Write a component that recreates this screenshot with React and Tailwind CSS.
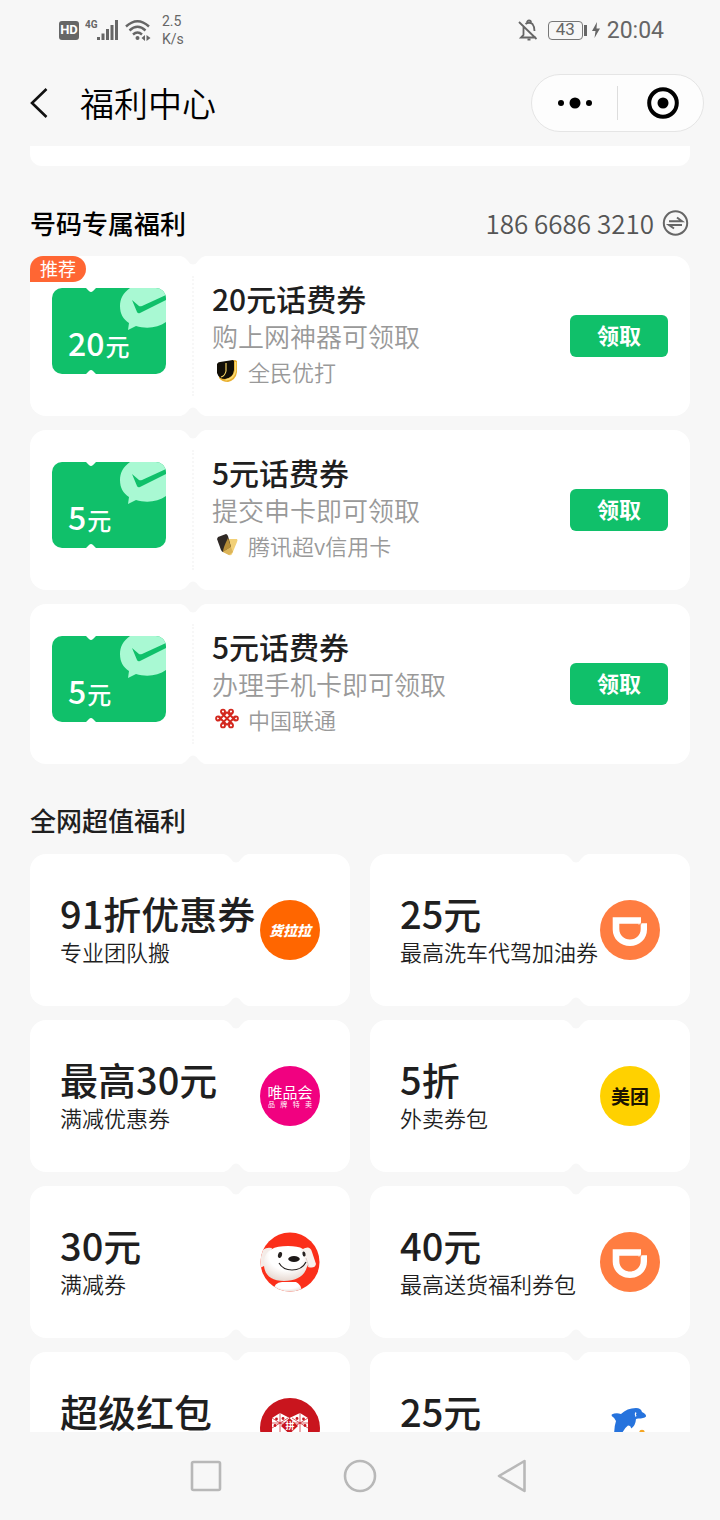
const phoneCoupons = [
  { id: 1, amount: "20", title: "20元话费券", desc: "购上网神器可领取", brand: "全民优打", Icon: QuanminIcon, recommended: true },
  { id: 2, amount: "5", title: "5元话费券", desc: "提交申卡即可领取", brand: "腾讯超v信用卡", Icon: CreditCardIcon },
  { id: 3, amount: "5", title: "5元话费券", desc: "办理手机卡即可领取", brand: "中国联通", Icon: UnicomIcon },
];

const deals = [
  { id: 1, title: "91折优惠券", desc: "专业团队搬", Logo: HuolalaLogo },
  { id: 2, title: "25元", desc: "最高洗车代驾加油券", Logo: DidiLogo },
  { id: 3, title: "最高30元", desc: "满减优惠券", Logo: VipLogo },
  { id: 4, title: "5折", desc: "外卖券包", Logo: MeituanLogo },
  { id: 5, title: "30元", desc: "满减券", Logo: JdLogo },
  { id: 6, title: "40元", desc: "最高送货福利券包", Logo: DidiLogo },
  { id: 7, title: "超级红包", Logo: PddLogo },
  { id: 8, title: "25元", Logo: DolphinLogo },
];

/* ---------- Brand icons ---------- */

function QuanminIcon() {
  return (
    <svg viewBox="0 0 24 24" className="size-6" aria-hidden="true">
      <path d="M5 4 20 1 22 2V13Q21 21 13 23 7 23 4 19Z" fill="#e9b030" />
      <path d="M2 5Q3 3 5 3L18 1 19 2V11Q18 19 10 20 4 20 2 14Z" fill="#120e06" />
      <path d="M11 4v8q-1 5-5 6" fill="none" stroke="#f1cf62" strokeWidth="1.2" />
      <path d="M20.500 3v9q-2 8-10 9" fill="none" stroke="#fbdc74" strokeWidth="1.4" />
    </svg>
  );
}

function CreditCardIcon() {
  return (
    <svg viewBox="0 0 24 24" className="size-6" aria-hidden="true">
      <path d="M12 6 22 6Q23 7 22 9L17 21Q16 23 14 22L8 19Z" fill="#f2d077" />
      <path d="M3 4 11 1Q12 1 13 3L16 14 8 19Q7 19 6 17L2 6Z" fill="#2f2925" />
      <path d="M13 5 16 14 8 19Q8 15 13 5Z" fill="#b58d38" />
      <path d="M16 14 18 19 14 22 8 19Z" fill="#dcb458" />
    </svg>
  );
}

function UnicomIcon() {
  return (
    <svg viewBox="0 0 24 24" className="size-6" fill="none" stroke="#d3281e" strokeWidth="1.9" aria-hidden="true">
      <path d="M6.500 6 17.500 17M6.500 17 17.500 6M3.500 9.500 12 18M20.500 9.500 12 18M3.500 13.500 12 5M20.500 13.500 12 5" />
      <circle cx="8" cy="4.600" r="2" />
      <circle cx="16" cy="4.600" r="2" />
      <circle cx="3.200" cy="11.500" r="2.100" />
      <circle cx="20.800" cy="11.500" r="2.100" />
      <circle cx="8" cy="18.400" r="2" />
      <circle cx="16" cy="18.400" r="2" />
    </svg>
  );
}

/* ---------- Deal logos ---------- */

function HuolalaLogo() {
  return (
    <div className="flex size-[60px] items-center justify-center rounded-full bg-[#ff6600] text-sm leading-none font-black text-white italic">
      货拉拉
    </div>
  );
}

function VipLogo() {
  return (
    <div className="flex size-[60px] flex-col items-center justify-center rounded-full bg-[#f10180] text-white">
      <span className="text-[15px] leading-4">唯品会</span>
      <span className="flex w-11 justify-between text-[7px] leading-2">
        <span>品</span>
        <span>牌</span>
        <span>特</span>
        <span>卖</span>
      </span>
    </div>
  );
}

function MeituanLogo() {
  return (
    <div className="flex size-[60px] items-center justify-center rounded-full bg-[#ffd100] pb-0.5 text-[19px] leading-none font-bold text-[#1c1400]">
      美团
    </div>
  );
}

function DidiLogo() {
  return (
    <svg viewBox="0 0 60 60" className="size-[60px]" aria-hidden="true">
      <circle cx="30" cy="30" r="30" fill="#ff7d41" />
      <path
        d="M12.700 17.300H41v6h6v6.200C47 39 39.500 46 30 46s-17.300-7-17.300-16.500Z M19.300 23.800V29c0 6 4.700 10.500 10.700 10.500S40.700 35 40.700 29v-4.200h-2.400v-1Z"
        fill="#fff"
        fillRule="evenodd"
      />
      <path d="M38.300 24.300h2.700v-1.500" fill="none" stroke="#ff7d41" strokeWidth=".8" />
    </svg>
  );
}

function JdLogo() {
  return (
    <svg viewBox="0 0 60 60" className="size-[60px]" aria-hidden="true">
      <defs>
        <clipPath id="jd-clip">
          <circle cx="30" cy="30" r="29.500" />
        </clipPath>
        <radialGradient id="jd-fur" cx=".5" cy=".3" r=".75">
          <stop offset=".5" stopColor="#fff" />
          <stop offset="1" stopColor="#e3d3cb" />
        </radialGradient>
      </defs>
      <g clipPath="url(#jd-clip)">
        <rect width="60" height="60" fill="#fb2f1a" />
        <path d="M12 16Q3 14 0 23V36L6 33Z" fill="#f4ece8" />
        <path d="M13 60Q14 50 22 50H36Q41 52 42 60Z" fill="url(#jd-fur)" />
        <path d="M4 29C5 18 14 14 28 14 42 14 49 18 48 29 47 43 38 49 24 49 9 49 3 41 4 29Z" fill="url(#jd-fur)" />
        <path d="M41 18Q50 12 52 20L56 32Q55 37 48 35L45 26Z" fill="#f8f1ed" />
        <path d="M46 26 49 35" fill="none" stroke="#d9c7c0" strokeWidth=".8" />
        <ellipse cx="20" cy="23" rx="2" ry="3" fill="#282321" transform="rotate(15 20 23)" />
        <ellipse cx="44" cy="22" rx="1.500" ry="2.600" fill="#282321" transform="rotate(-15 44 22)" />
        <ellipse cx="34" cy="27" rx="5.800" ry="2.900" fill="#1d1817" />
        <path d="M19 31Q23 38 32 38 42 38 46 30" fill="none" stroke="#282321" strokeWidth="1.200" />
      </g>
    </svg>
  );
}

function PddLogo() {
  return (
    <svg viewBox="0 0 60 60" className="size-[60px]" aria-hidden="true">
      <circle cx="30" cy="30" r="30" fill="#c9151e" />
      <path d="M20 15 29.500 20 40 15 48 20V34L30 52 12 34V20Z" fill="#fff" />
      <path
        d="M20 15V34M40 15V34M12 20 28 30M12 30 28 20M48 20 32 30M48 30 32 20M12 25H26M34 25H48"
        stroke="#c9151e"
        strokeWidth=".7"
      />
      <g fill="#c9151e">
        <circle cx="16.500" cy="21" r="1.400" />
        <circle cx="23" cy="20.500" r="1.400" />
        <circle cx="15" cy="27.500" r="1.400" />
        <circle cx="37" cy="20.500" r="1.400" />
        <circle cx="43.500" cy="21" r="1.400" />
        <circle cx="45" cy="27.500" r="1.400" />
        <path d="M29.500 20 38 28 29.500 36 21 28Z" />
      </g>
      <text x="30" y="31" textAnchor="middle" fontSize="9" fontWeight="700" fill="#fff">
        拼
      </text>
    </svg>
  );
}

function DolphinLogo() {
  return (
    <svg viewBox="0 0 60 60" className="size-[60px]" aria-hidden="true">
      <path
        d="M11.700 16.500Q16 14.500 21 16 27 10 36 10 41 10 42 14 46.500 16 46 18.500 44 20.500 38 20.500L36 21Q35.500 28 31 30.500 31 27.500 28 27.500 22 32 21 40L15 44Q13 32 16 23 15 20 11.700 18Z"
        fill="#2673dd"
      />
      <path d="M36 14.500q-1.500 2 0 4" fill="none" stroke="#fff" strokeWidth="1.300" />
      <circle cx="42" cy="34.500" r="2.800" fill="#f5a623" />
    </svg>
  );
}

/* ---------- Shared pieces ---------- */

// Small bites cut out of the top and bottom edge of a coupon
function Notches({ className = "" }) {
  return (
    <div className={`pointer-events-none absolute inset-y-0 flex w-6 flex-col justify-between text-[#f7f7f7] ${className}`}>
      <svg viewBox="0 0 24 9" className="w-full" fill="currentColor" aria-hidden="true">
        <path d="M0 0Q4 1 7 5 9 8.500 12 8.500T17 5Q20 1 24 0Z" />
      </svg>
      <svg viewBox="0 0 24 9" className="w-full rotate-180" fill="currentColor" aria-hidden="true">
        <path d="M0 0Q4 1 7 5 9 8.500 12 8.500T17 5Q20 1 24 0Z" />
      </svg>
    </div>
  );
}

function TicketImage({ amount }) {
  return (
    <div className="relative h-[86px] w-[114px] shrink-0 overflow-hidden rounded-[10px] bg-[#10c06a]">
      <svg viewBox="0 0 114 86" className="absolute inset-0 size-full" aria-hidden="true">
        <path d="M34 0 37 3Q39 5 41 3L44 0ZM34 86 37 83Q39 81 41 83L44 86Z" fill="#fff" />
        <path
          d="M78 0C71 5 68 11 68 18 68 26 71 31 77 35L76 42 84 38C94 41 106 40 114 34V0Z"
          fill="#a9f9d3"
        />
        <path d="M80 12 87 18Q88 18.500 90 18L114 7V12L88 25Q86 26 85 24Z" fill="#10c06a" />
      </svg>
      <p className="relative flex items-baseline gap-px pt-9 pl-4 text-white">
        <span className="text-[32px] leading-9 font-medium">{amount}</span>
        <span className="text-2xl leading-9 font-medium">元</span>
      </p>
    </div>
  );
}

function PhoneCoupon({ amount, title, desc, brand, Icon, recommended }) {
  return (
    <li className="relative flex h-40 items-center rounded-2xl bg-white px-[22px]">
      <Notches className="left-[151px]" />
      {recommended && (
        <span className="absolute top-0 left-0 rounded-t-[13px] rounded-br-[13px] bg-[#ff6633] px-[10px] pb-0.5 text-lg leading-6 text-white">
          推荐
        </span>
      )}
      <div className="flex h-[120px] w-[142px] shrink-0 items-center border-r-2 border-dotted border-[#f7f7f7] pb-[10px]">
        <TicketImage amount={amount} />
      </div>
      <div className="min-w-0 flex-1 pb-[6px] pl-[18px]">
        <h3 className="text-3xl leading-10 font-medium text-[#1f1f1f]">{title}</h3>
        <p className="text-[26px] leading-9 font-[350] text-[#999]">{desc}</p>
        <p className="flex items-center gap-[9px] pl-[3px] text-[22px] leading-[34px] font-[350] text-[#999]">
          <Icon />
          {brand}
        </p>
      </div>
      <button type="button" className="h-[42px] w-[98px] rounded-md bg-[#10c06a] pb-1 text-[22px] leading-none font-bold text-white">
        领取
      </button>
    </li>
  );
}

function DealCard({ title, desc, Logo }) {
  return (
    <li>
      <a href="#deal" className="relative flex h-[152px] items-center justify-between rounded-2xl bg-white px-[30px]">
        <Notches className="right-[102px]" />
        <div className="w-0 flex-1 pb-0.5 whitespace-nowrap">
          <h3 className="text-[38px] leading-11 font-medium text-[#1f1f1f]">{title}</h3>
          <p className="min-h-8 text-[22px] leading-8 font-[350] text-[#1f1f1f]">{desc}</p>
        </div>
        <Logo />
      </a>
    </li>
  );
}

function StatusBar() {
  return (
    <div className="flex h-[60px] shrink-0 items-center justify-between pr-14 pl-[59px] font-[Roboto,sans-serif] text-[#666]">
      <div className="flex items-center">
        <span className="flex h-[19px] w-5 items-center justify-center rounded-[3px] bg-[#666] text-[13px] font-bold text-white">HD</span>
        <svg viewBox="0 0 34 24" className="ml-1.5 h-6 w-[34px]" fill="currentColor" aria-hidden="true">
          <text x="0" y="10" fontSize="10" fontWeight="700">4G</text>
          <path d="M12 19h3v3h-3zM16.500 15.500h3V22h-3zM21 11h3v11h-3zM25.500 7h3v15h-3zM30 2h3v20h-3z" />
        </svg>
        <svg viewBox="0 0 26 24" className="ml-1.5 h-6 w-[26px]" fill="none" stroke="currentColor" strokeWidth="2.400" aria-hidden="true">
          <path d="M1 8.500Q12.500-2 24 8.500M4.500 12.500Q12.500 5 20.500 12.500M8 16.500Q12.500 12.500 17 16.500" />
          <circle cx="12.500" cy="20" r="2" fill="currentColor" stroke="none" />
          <path d="M20 17v6l-3.500-3zM21.500 17v6l4-3z" fill="currentColor" stroke="none" />
        </svg>
        <div className="ml-[11px] text-sm leading-[18px]">
          <p>2.5</p>
          <p>K/s</p>
        </div>
      </div>
      <div className="flex items-center">
        <svg viewBox="0 0 24 24" className="size-6" fill="none" stroke="currentColor" strokeWidth="1.800" aria-hidden="true">
          <path d="M6.500 8.500V17L4 19.500h15M8.500 6Q12 3.500 15.500 6 17.500 8.500 17.500 13M2 4l17.500 17" />
          <path d="M10 4.500a2 2 0 0 1 4 0M10.500 21.500h3" />
        </svg>
        <span className="ml-[7px] flex h-[19px] w-[35px] items-center justify-center rounded-[4px] border border-[#777] text-[17px]">43</span>
        <span className="ml-px h-[11px] w-[3px] bg-[#666]" />
        <svg viewBox="0 0 10 18" className="ml-1 h-[18px] w-2.5" fill="currentColor" aria-hidden="true">
          <path d="M6 1 1 10h3.500L3.500 17 9 7.500H5.500Z" />
        </svg>
        <span className="ml-1.5 pt-0.5 text-[23px]">20:04</span>
      </div>
    </div>
  );
}

function Header() {
  return (
    <header className="flex h-[86px] shrink-0 items-center pr-4 pb-px pl-[27px]">
      <button type="button" aria-label="返回">
        <svg viewBox="0 0 24 34" className="h-[34px] w-6" fill="none" stroke="#111" strokeWidth="2.600" aria-hidden="true">
          <path d="M19.500 3 5 17 19.500 31" />
        </svg>
      </button>
      <h1 className="flex-1 pl-[29px] text-[34px] leading-10 font-[350] text-black">福利中心</h1>
      <div className="flex h-[58px] w-[173px] items-center rounded-full border border-[#e5e5e5] bg-[#fdfdfd]">
        <button type="button" aria-label="更多" className="flex h-full w-[85px] items-center justify-center">
          <svg viewBox="0 0 36 12" className="h-3 w-9" aria-hidden="true">
            <circle cx="4" cy="6" r="3" />
            <circle cx="18" cy="6" r="5.500" />
            <circle cx="32" cy="6" r="3" />
          </svg>
        </button>
        <span className="h-[34px] w-px bg-[#ddd]" />
        <button type="button" aria-label="关闭" className="flex h-full flex-1 items-center justify-center pl-1">
          <svg viewBox="0 0 32 32" className="size-8" aria-hidden="true">
            <circle cx="16" cy="16" r="13.800" fill="none" stroke="#000" strokeWidth="4" />
            <circle cx="16" cy="16" r="5.500" />
          </svg>
        </button>
      </div>
    </header>
  );
}

function SystemNav() {
  return (
    <nav className="flex h-[88px] shrink-0 items-center justify-center gap-[118px] text-[#b8b8b8]">
      <button type="button" aria-label="最近任务">
        <svg viewBox="0 0 36 36" className="size-9" fill="none" stroke="currentColor" strokeWidth="2.600" aria-hidden="true">
          <rect x="4" y="4" width="28" height="28" rx="1.500" />
        </svg>
      </button>
      <button type="button" aria-label="主屏幕">
        <svg viewBox="0 0 36 36" className="size-9" fill="none" stroke="currentColor" strokeWidth="2.600" aria-hidden="true">
          <circle cx="18" cy="18" r="15" />
        </svg>
      </button>
      <button type="button" aria-label="返回上一页">
        <svg viewBox="0 0 36 36" className="size-9" fill="none" stroke="currentColor" strokeWidth="2.600" strokeLinejoin="round" aria-hidden="true">
          <path d="M28.500 3V33L3 18Z" />
        </svg>
      </button>
    </nav>
  );
}

export default function App() {
  return (
    <div className="flex h-screen flex-col bg-[#f7f7f7] font-['Noto_Sans_CJK_SC',sans-serif]">
      <StatusBar />
      <Header />
      <main className="min-h-0 flex-1 overflow-hidden px-[30px]">
        <div className="h-5 rounded-b-xl bg-white" />

        <section>
          <div className="flex h-[90px] items-center justify-between pt-6">
            <h2 className="text-[26px] leading-9 font-medium text-black">号码专属福利</h2>
            <button type="button" className="flex items-center gap-2 text-[26px] leading-9 font-[350] text-[#555]">
              186 6686 3210
              <svg viewBox="0 0 28 28" className="size-7" fill="none" stroke="#666" strokeWidth="2" aria-hidden="true">
                <circle cx="13.500" cy="14" r="11.700" />
                <path d="M7 12.200H20L15 8.500M20 16H7L12 19.500" />
              </svg>
            </button>
          </div>
          <ul className="flex flex-col gap-[14px]">
            {phoneCoupons.map((coupon) => (
              <PhoneCoupon key={coupon.id} {...coupon} />
            ))}
          </ul>
        </section>

        <section>
          <h2 className="pt-[38px] pb-4 text-[26px] leading-9 font-medium text-[#1f1f1f]">全网超值福利</h2>
          <ul className="grid grid-cols-2 gap-x-5 gap-y-[14px]">
            {deals.map((deal) => (
              <DealCard key={deal.id} {...deal} />
            ))}
          </ul>
        </section>
      </main>
      <SystemNav />
    </div>
  );
}
